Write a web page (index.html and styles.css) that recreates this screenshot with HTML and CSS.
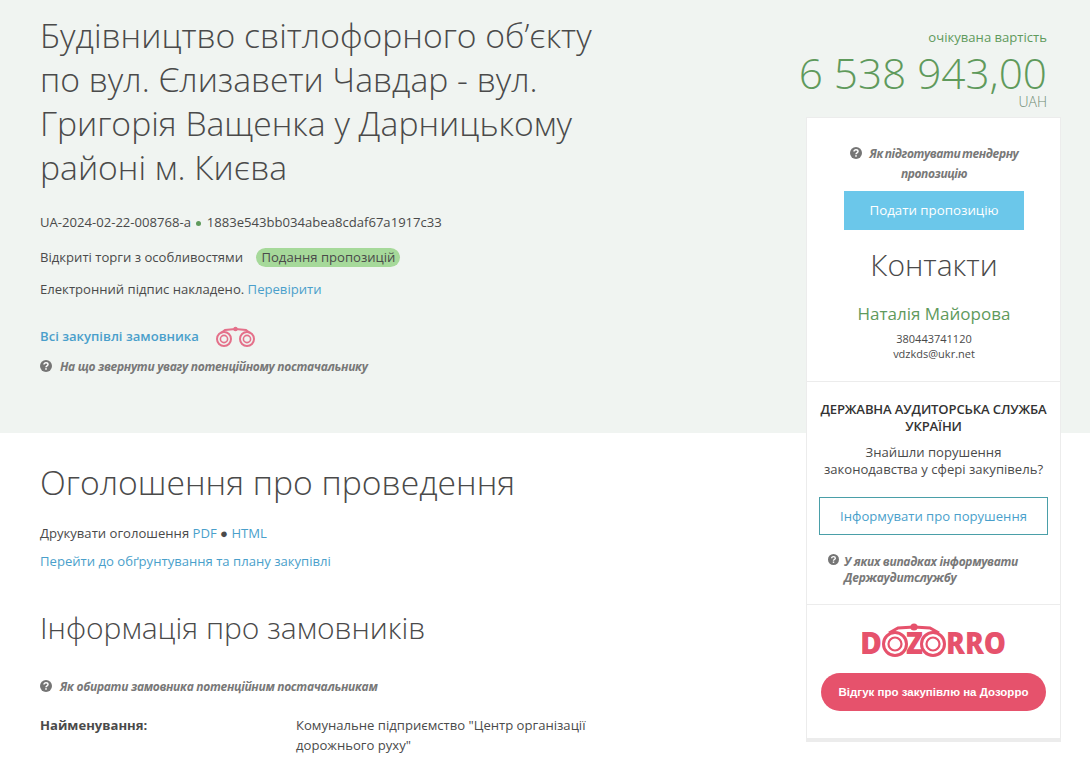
FILE: index.html
```html
<!DOCTYPE html>
<html lang="uk">
<head>
    <meta charset="UTF-8">
    <meta name="viewport" content="width=device-width, initial-scale=1.0">
    <title>Будівництво світлофорного об'єкту</title>
    <link rel="stylesheet" href="styles.css">
</head>
<body>
    <svg class="icon-defs" width="0" height="0" aria-hidden="true">
        <symbol id="q" viewBox="0 0 12 12">
            <circle cx="6" cy="6" r="6" fill="#757575"/>
            <path d="M4 4.6C4 3.4 4.9 2.8 6 2.8c1.2 0 2 .7 2 1.7 0 1.5-2 1.4-2 2.8" fill="none" stroke="#fff" stroke-width="1.5"/>
            <rect x="5.2" y="8.2" width="1.6" height="1.5" fill="#fff"/>
        </symbol>
    </svg>

    <div class="page">
        <div class="band"></div>

        <main class="main-col">
            <section class="hero">
                <h1>Будівництво світлофорного об’єкту по вул. Єлизавети Чавдар - вул. Григорія Ващенка у Дарницькому районі м. Києва</h1>
                <p class="meta ids">UA-2024-02-22-008768-a <span class="dot"></span> 1883e543bb034abea8cdaf67a1917c33</p>
                <p class="meta status-row">Відкриті торги з особливостями <span class="pill">Подання пропозицій</span></p>
                <p class="meta">Електронний підпис накладено. <a href="#">Перевірити</a></p>
                <p class="meta buyer-row">
                    <a class="strong-link" href="#">Всі закупівлі замовника</a>
                    <svg class="binoculars" viewBox="0 0 40 22" width="40" height="22">
                        <g fill="none" stroke="#e4708a">
                            <circle cx="8" cy="13" r="7" stroke-width="2"/>
                            <circle cx="8" cy="13" r="3.6" stroke-width="1.6"/>
                            <circle cx="31" cy="13" r="7" stroke-width="2"/>
                            <circle cx="31" cy="13" r="3.6" stroke-width="1.6"/>
                            <path d="M5 7 L9 4 L19.5 3 L30 4 L34 7" stroke-width="2"/>
                        </g>
                        <circle cx="19.5" cy="3" r="2.2" fill="#e4708a"/>
                    </svg>
                </p>
                <p class="hint"><svg class="q"><use href="#q"/></svg>На що звернути увагу потенційному постачальнику</p>
            </section>

            <section class="notice">
                <h2>Оголошення про проведення</h2>
                <p class="meta">Друкувати оголошення <a href="#">PDF</a> ● <a href="#">HTML</a></p>
                <p class="meta"><a href="#">Перейти до обґрунтування та плану закупівлі</a></p>
            </section>

            <section class="buyer">
                <h3>Інформація про замовників</h3>
                <p class="hint"><svg class="q"><use href="#q"/></svg>Як обирати замовника потенційним постачальникам</p>
                <div class="field">
                    <strong>Найменування:</strong>
                    <span>Комунальне підприємство "Центр організації дорожнього руху"</span>
                </div>
            </section>
        </main>

        <aside class="side-col">
            <div class="price">
                <div class="price-label">очікувана вартість</div>
                <div class="price-value">6 538 943,00</div>
                <div class="price-cur">UAH</div>
            </div>

            <div class="card">
                <div class="card-part contacts">
                    <p class="hint centered"><svg class="q"><use href="#q"/></svg>Як підготувати тендерну пропозицію</p>
                    <a class="btn-submit" href="#">Подати пропозицію</a>
                    <div class="contacts-title">Контакти</div>
                    <div class="contact-name">Наталія Майорова</div>
                    <div class="contact-line">380443741120</div>
                    <div class="contact-line">vdzkds@ukr.net</div>
                </div>

                <div class="card-part audit">
                    <div class="audit-title">ДЕРЖАВНА АУДИТОРСЬКА СЛУЖБА УКРАЇНИ</div>
                    <div class="audit-text">Знайшли порушення законодавства у сфері закупівель?</div>
                    <a class="btn-outline" href="#">Інформувати про порушення</a>
                    <p class="hint audit-hint"><svg class="q"><use href="#q"/></svg><span>У яких випадках інформувати Держаудитслужбу</span></p>
                </div>

                <div class="card-part dozorro">
                    <svg class="logo" viewBox="0 0 143 42" width="143" height="42" role="img" aria-label="DOZORRO">
                        <g class="logo-text">
                            <text x="-2" y="32" textLength="22" lengthAdjust="spacingAndGlyphs">D</text>
                            <text x="44" y="32" textLength="17" lengthAdjust="spacingAndGlyphs">Z</text>
                            <text x="84" y="32" textLength="60" lengthAdjust="spacingAndGlyphs">RRO</text>
                        </g>
                        <g fill="none" stroke="#e6526c">
                            <circle cx="33" cy="22" r="11.5" stroke-width="3"/>
                            <circle cx="33" cy="22" r="6.5" stroke-width="2.2"/>
                            <circle cx="71" cy="22" r="11.5" stroke-width="3"/>
                            <circle cx="71" cy="22" r="6.5" stroke-width="2.2"/>
                            <path d="M27 11 L36 6 L52 5 L68 6 L77 11" stroke-width="3"/>
                        </g>
                        <circle cx="52" cy="5" r="3.6" fill="#e6526c"/>
                    </svg>
                    <a class="btn-pink" href="#">Відгук про закупівлю на Дозорро</a>
                </div>
            </div>
        </aside>
    </div>
</body>
</html>
```

FILE: styles.css
```css
:root {
    --band-color: #f0f4f1;
    --text-color: #4a4a4a;
    --link-color: #4a9fcb;
    --green-color: #5f9a5c;
    --pink-color: #e6526c;
    --font-family: 'Open Sans', 'Noto Sans', sans-serif;
}
body {
    font-family: var(--font-family);
    font-size: 13.1px;
    color: var(--text-color);
    background: #fff;
    margin: 0;
    height: 765px;
    overflow: hidden;
}
a {
    color: var(--link-color);
    text-decoration: none;
}
.icon-defs {
    position: absolute;
}
.page {
    position: relative;
    display: grid;
    grid-template-columns: 806px 255px;
    align-items: start;
}
.band {
    position: absolute;
    top: 0;
    left: 0;
    width: 1090px;
    height: 433px;
    background: var(--band-color);
}
.main-col, .side-col {
    position: relative;
}
.main-col {
    padding-left: 40px;
}

/* hero */
.hero {
    height: 433px;
    padding-top: 13px;
    box-sizing: border-box;
}
.hero h1 {
    width: 580px;
    margin: 0 0 23px;
    font-size: 33.7px;
    font-weight: 300;
    line-height: 44px;
}
.meta {
    margin: 0 0 15px;
    line-height: 20px;
}
.dot {
    display: inline-block;
    width: 5px;
    height: 5px;
    margin: 0 2px;
    border-radius: 50%;
    background: var(--green-color);
    vertical-align: 1px;
}
.status-row {
    margin-bottom: 12px;
}
.pill {
    display: inline-block;
    margin-left: 10px;
    padding: 0 5px;
    border-radius: 10px;
    background: #a6d99a;
    line-height: 19px;
}
.buyer-row {
    display: flex;
    align-items: center;
    gap: 17px;
    margin: 25px 0 9px;
}
.strong-link {
    font-weight: 600;
}
.binoculars {
    margin-top: 2px;
}
.hint {
    margin: 0;
    font-style: italic;
    font-weight: 700;
    font-size: 12px;
    color: #787878;
    line-height: 20px;
    letter-spacing: -0.3px;
}
.q {
    width: 12px;
    height: 12px;
    margin-right: 8px;
    vertical-align: -1px;
}

/* content */
.notice h2 {
    margin: 25px 0 17px;
    font-size: 33.7px;
    font-weight: 300;
    line-height: 48px;
}
.notice .meta {
    margin-bottom: 8px;
}
.buyer h3 {
    margin: 38px 0 30px;
    font-size: 30px;
    font-weight: 300;
    line-height: 38px;
}
.field {
    display: grid;
    grid-template-columns: 256px 310px;
    margin-top: 18px;
    line-height: 20px;
}
.field strong {
    font-weight: 700;
}

/* right column */
.price {
    width: 241px;
    padding-top: 27px;
    text-align: right;
    color: var(--green-color);
}
.price-label {
    line-height: 20px;
}
.price-value {
    margin-left: -40px;
    font-size: 42.3px;
    font-weight: 300;
    line-height: 52px;
    white-space: nowrap;
}
.price-cur {
    margin-top: -4px;
    font-size: 14px;
    font-weight: 300;
    line-height: 14px;
    color: #6f8a73;
}
.card {
    margin-top: 8px;
    background: #fff;
    border: 1px solid #ececec;
    border-bottom: 4px solid #ececec;
    box-sizing: border-box;
    height: 625px;
    text-align: center;
}
.card-part {
    border-bottom: 1px solid #ececec;
    box-sizing: border-box;
}
.contacts {
    height: 264px;
    padding: 26px 36px 0 37px;
}
.centered {
    text-align: center;
    word-spacing: -1px;
    letter-spacing: -0.4px;
}
.btn-submit {
    display: block;
    margin-top: 7px;
    background: #6bc7ea;
    color: #fff;
    line-height: 39px;
    font-size: 13.3px;
}
.contacts-title {
    margin: 15px -30px 0;
    font-size: 30px;
    font-weight: 300;
    line-height: 40px;
}
.contact-name {
    margin: 17px -30px 0;
    font-size: 17px;
    line-height: 24px;
    color: var(--green-color);
}
.contact-line {
    font-size: 11px;
    line-height: 15px;
}
.contact-name + .contact-line {
    margin-top: 5px;
}
.audit {
    height: 223px;
    padding: 19px 12px 0;
}
.audit-title {
    font-weight: 600;
    line-height: 17px;
    color: #333;
    letter-spacing: -0.15px;
}
.audit-text {
    margin-top: 9px;
    line-height: 17px;
}
.btn-outline {
    display: block;
    margin-top: 19px;
    border: 1px solid #4a9fa8;
    line-height: 36px;
}
.audit-hint {
    display: flex;
    gap: 5px;
    margin: 19px 0 0 9px;
    text-align: left;
    line-height: 16px;
}
.audit-hint .q {
    margin: 0;
    flex: none;
    width: 11px;
    height: 11px;
}
.dozorro {
    border-bottom: none;
    padding: 17px 14px 0;
}
.logo {
    display: block;
    margin: 0 auto;
}
.logo-text text {
    font-family: 'Open Sans', sans-serif;
    font-weight: 800;
    font-size: 29.5px;
    fill: var(--pink-color);
}
.btn-pink {
    display: block;
    margin-top: 9px;
    background: var(--pink-color);
    color: #fff;
    border-radius: 19px;
    line-height: 38px;
    font-size: 11.5px;
    font-weight: 700;
    font-family: 'Liberation Sans', sans-serif;
}
```
